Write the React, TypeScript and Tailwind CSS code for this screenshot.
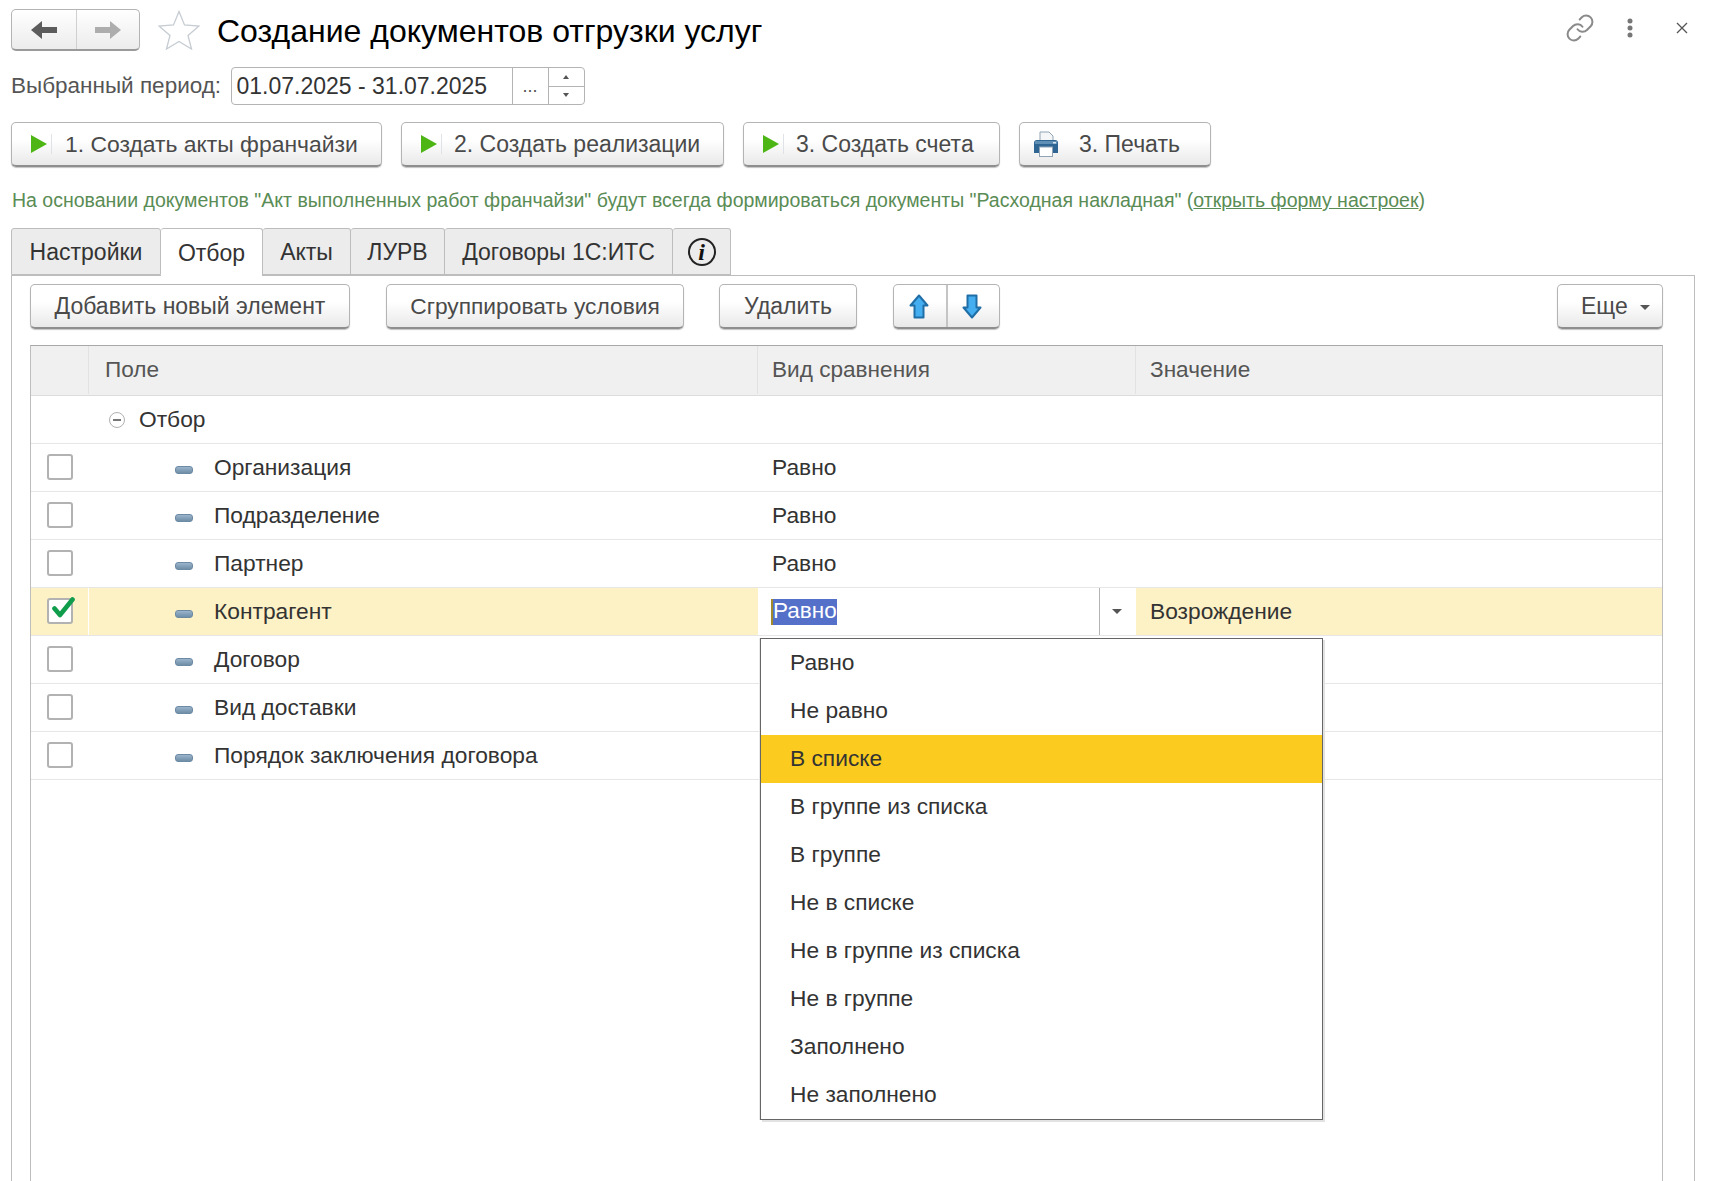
import { Link } from "lucide-react"
import type { ReactNode } from "react"

const btn = "flex items-center rounded-[5px] border border-[#b4b4b4] border-b-2 border-b-[#8e8e8e] bg-gradient-to-b from-white from-40% to-[#e9e9e9] shadow-[0_1px_1px_#c4c4c4] text-[#4a4a4a]"

const Play = () => (
    <div className="flex items-center">
        <div className="w-0 h-0 border-y-[9px] border-y-transparent border-l-[16px] border-l-[#4db514]" />
        <div className="ml-[4px] w-px h-[20px] bg-[#dfe3e8]" />
    </div>
)

const Printer = () => (
    <svg width="26" height="26" viewBox="0 0 26 26">
        <path d="M7 1h9l4 4v6H7z" fill="#f4f6f8" stroke="#8fa3b5" />
        <path d="M1 12q0-3 3-3h18q3 0 3 3v10H1z" fill="#2f6592" />
        <rect x="2" y="10" width="22" height="3" fill="#5f8fb5" />
        <rect x="20" y="11" width="3" height="1.5" fill="#d9e6f0" />
        <rect x="6.5" y="16" width="13" height="9.5" fill="#fff" stroke="#8fa3b5" />
    </svg>
)

const Arrow = ({ dir }: { dir: "up" | "down" }) => (
    <svg width="20" height="25" viewBox="0 0 20 25" className={dir === "down" ? "rotate-180" : ""}>
        <path d="M10 1.500 18.500 11.500 14.500 11.500 14.500 23.500 5.500 23.500 5.500 11.500 1.500 11.500z" fill="#45aef0" stroke="#1f6ea6" strokeWidth="2" strokeLinejoin="round" />
    </svg>
)

const NavArrow = ({ color, flip }: { color: string; flip?: boolean }) => (
    <svg width="26" height="18" viewBox="0 0 26 18" className={flip ? "rotate-180" : ""}>
        <path d="M0 9 11 0v6h15v6H11v6z" fill={color} />
    </svg>
)

const Check = ({ on }: { on?: boolean }) => (
    <div className="relative mb-[2px] w-[26px] h-[26px] rounded-[3px] border-2 border-[#b2b2b2] bg-white">
        {on && (
            <svg width="23" height="21" viewBox="0 0 23 21" className="absolute left-[3px] top-[-3px]">
                <path d="M2.5 11.5l5.500 6.500L20.500 2.500" fill="none" stroke="#0f9d4c" strokeWidth="4.6" strokeLinecap="round" strokeLinejoin="round" />
            </svg>
        )}
    </div>
)

const Pill = () => (
    <div className="mt-[4px] w-[18px] h-[8px] rounded-[3px] bg-gradient-to-b from-[#9ab4cc] to-[#6f8ea8] border border-[#6d8aa3]" />
)

const Tab = ({ w, active, children }: { w: string; active?: boolean; children: ReactNode }) => (
    <div className={`${w} flex items-center justify-center pt-[2px] rounded-t-[3px] border border-l-0 first:border-l border-[#bdbdbd] ${active ? "h-[48px] -mb-px bg-white border-b-0" : "h-[47px] bg-[#ececec]"}`}>
        {children}
    </div>
)

const rows = ["Организация", "Подразделение", "Партнер", "Контрагент", "Договор", "Вид доставки", "Порядок заключения договора"]

const options = ["Равно", "Не равно", "В списке", "В группе из списка", "В группе", "Не в списке", "Не в группе из списка", "Не в группе", "Заполнено", "Не заполнено"]

export default function App() {
    return (
        <div className="relative w-[1713px] h-[1181px] overflow-hidden bg-white font-['Liberation_Sans',Arial,sans-serif] text-[22.75px] text-[#333] leading-none">
            {/* title bar */}
            <div className="flex items-center h-[42px] mt-[9px] ml-[11px] mr-[22px]">
                <div className="flex w-[129px] h-[42px] rounded-[5px] border border-[#b4b4b4] border-b-2 border-b-[#9a9a9a] bg-gradient-to-b from-white to-[#ececec]">
                    <div className="w-[65px] flex items-center justify-center border-r border-[#d0d0d0]"><NavArrow color="#5c5c5c" /></div>
                    <div className="flex-1 flex items-center justify-center"><NavArrow color="#adadad" flip /></div>
                </div>
                <svg width="42" height="40" viewBox="0 0 42 40" className="ml-[18px]">
                    <path d="M21 1.500 26.500 15 41 16 30 25.500 33.500 39 21 31.500 8.500 39 12 25.500 1 16 15.500 15z" fill="#fff" stroke="#c6ccd2" strokeWidth="1.3" />
                </svg>
                <h1 className="ml-[17px] mt-[2px] text-[32px] text-black whitespace-nowrap">Создание документов отгрузки услуг</h1>
                <div className="ml-auto mb-[4px] flex items-center">
                    <Link size={30} strokeWidth={1.6} className="text-[#8a8a8a]" />
                    <svg width="6" height="20" viewBox="0 0 6 20" className="ml-[32px]">
                        <circle cx="3" cy="3" r="2.500" fill="#777" />
                        <circle cx="3" cy="10" r="2.500" fill="#777" />
                        <circle cx="3" cy="17" r="2.500" fill="#777" />
                    </svg>
                    <svg width="12" height="12" viewBox="0 0 12 12" className="ml-[43px] mr-[3px]">
                        <path d="M1 1l10 10M11 1 1 11" stroke="#555" strokeWidth="1.300" />
                    </svg>
                </div>
            </div>

            {/* period */}
            <div className="flex items-center mt-[16px] ml-[11px]">
                <span className="text-[#555] text-[22.5px] w-[219.5px] whitespace-nowrap">Выбранный период:</span>
                <div className="flex w-[354px] h-[38px] rounded-[4px] border border-[#b4b4b4]">
                    <div className="w-[281px] pl-[5px] pt-[1px] flex items-center border-r border-[#b4b4b4] text-[23px]">01.07.2025 - 31.07.2025</div>
                    <div className="w-[36px] flex items-end justify-center pb-[9px] border-r border-[#b4b4b4] text-[18px] text-[#555]">...</div>
                    <div className="flex-1 flex flex-col">
                        <div className="flex-1 flex items-center justify-center border-b border-[#b4b4b4]">
                            <div className="w-0 h-0 border-x-[3px] border-x-transparent border-b-[4px] border-b-[#555]" />
                        </div>
                        <div className="flex-1 flex items-center justify-center">
                            <div className="w-0 h-0 border-x-[3px] border-x-transparent border-t-[4px] border-t-[#555]" />
                        </div>
                    </div>
                </div>
            </div>

            {/* action buttons */}
            <div className="flex mt-[17px] ml-[11px] h-[45px] text-[23px]">
                <div className={`${btn} w-[371px] pl-[19px]`}><Play /><span className="ml-[13px] text-[22.9px]">1. Создать акты франчайзи</span></div>
                <div className={`${btn} w-[323px] ml-[19px] pl-[19px]`}><Play /><span className="ml-[12px]">2. Создать реализации</span></div>
                <div className={`${btn} w-[257px] ml-[19px] pl-[19px]`}><Play /><span className="ml-[12px]">3. Создать счета</span></div>
                <div className={`${btn} w-[192px] ml-[19px] pl-[13px]`}><Printer /><span className="ml-[20px]">3. Печать</span></div>
            </div>

            {/* hint */}
            <p className="mt-[24px] ml-[12px] h-[19px] text-[19.5px] text-[#5a8c55] whitespace-nowrap">
                На основании документов "Акт выполненных работ франчайзи" будут всегда формироваться документы "Расходная накладная" (<span className="underline">открыть форму настроек</span>)
            </p>

            {/* tabs */}
            <div className="flex mt-[18px] ml-[11px] relative z-10 text-[23px]">
                <Tab w="w-[150px]">Настройки</Tab>
                <Tab w="w-[102px]" active>Отбор</Tab>
                <Tab w="w-[88px]">Акты</Tab>
                <Tab w="w-[94px]">ЛУРВ</Tab>
                <Tab w="w-[228px]">Договоры 1С:ИТС</Tab>
                <Tab w="w-[58px]">
                    <div className="mb-[2px] w-[28px] h-[28px] rounded-full border-[2.5px] border-[#222] flex items-center justify-center font-['Liberation_Serif',serif] italic font-bold text-[24px] text-[#111]">i</div>
                </Tab>
            </div>

            {/* panel */}
            <div className="ml-[11px] w-[1684px] h-[906px] border border-b-0 border-[#bdbdbd] pt-[8px] pl-[18px] pr-[31px]">
                <div className="flex h-[45px] text-[#4a4a4a]">
                    <div className={`${btn} w-[320px] justify-center text-[23px]`}>Добавить новый элемент</div>
                    <div className={`${btn} w-[298px] ml-[36px] justify-center`}>Сгруппировать условия</div>
                    <div className={`${btn} w-[138px] ml-[35px] justify-center text-[23px]`}>Удалить</div>
                    <div className={`${btn} w-[107px] ml-[36px]`}>
                        <div className="w-[54px] h-full flex items-center justify-center pr-[3px] border-r-2 border-[#c4c4c4]"><Arrow dir="up" /></div>
                        <div className="flex-1 flex items-center justify-center pr-[3px]"><Arrow dir="down" /></div>
                    </div>
                    <div className={`${btn} w-[106px] ml-auto pl-[23px] text-[23px]`}>
                        Еще
                        <div className="ml-[12px] mt-[3px] w-0 h-0 border-x-[5px] border-x-transparent border-t-[5px] border-t-[#555]" />
                    </div>
                </div>

                {/* table */}
                <div className="mt-[16px] border-x border-t border-[#bdbdbd] border-t-[#a8a8a8] h-[836px]">
                    <div className="grid grid-cols-[58px_669px_378px_1fr] h-[50px] pb-[1px] bg-[#f0f0f0] border-b border-[#dcdcdc] text-[#555] text-[22.6px]">
                        <div className="border-r border-[#e2e2e2]" />
                        <div className="flex items-center pl-[16px] border-r border-[#e2e2e2]">Поле</div>
                        <div className="flex items-center pl-[14px] border-r border-[#e2e2e2]">Вид сравнения</div>
                        <div className="flex items-center pl-[14px]">Значение</div>
                    </div>
                    <div className="flex items-center h-[48px] border-b border-[#e6e6e6] pl-[78px]">
                        <div className="w-[16px] h-[16px] rounded-full border border-[#b0b0b0] flex items-center justify-center">
                            <div className="w-[8px] h-[2px] bg-[#777]" />
                        </div>
                        <span className="ml-[14px]">Отбор</span>
                    </div>
                    {rows.map((r) => {
                        const on = r === "Контрагент"
                        return (
                            <div key={r} className={`grid grid-cols-[58px_669px_378px_1fr] h-[48px] border-b border-[#e6e6e6] ${on ? "bg-[#fdf1c6]" : ""}`}>
                                <div className={`flex items-center pl-[16px] ${on ? "border-r border-white" : ""}`}><Check on={on} /></div>
                                <div className="flex items-center pl-[86px]">
                                    <Pill />
                                    <span className="ml-[21px]">{r}</span>
                                </div>
                                {on ? (
                                    <div className="flex bg-white">
                                        <div className="w-[342px] flex items-center pl-[14px] border-r border-[#b4b4b4]">
                                            <span className="bg-[#5570c9] text-white h-[26px] flex items-center border-l-2 border-[#a08a2c] -ml-[1px] text-[22.5px]">Равно</span>
                                        </div>
                                        <div className="flex-1 flex items-center justify-center pr-[3px]">
                                            <div className="w-0 h-0 border-x-[5px] border-x-transparent border-t-[5px] border-t-[#555]" />
                                        </div>
                                    </div>
                                ) : (
                                    <div className="flex items-center pl-[14px]">{["Организация", "Подразделение", "Партнер"].includes(r) ? "Равно" : ""}</div>
                                )}
                                <div className="flex items-center pl-[14px]">{on ? "Возрождение" : ""}</div>
                            </div>
                        )
                    })}
                </div>
            </div>

            {/* dropdown */}
            <div className="absolute left-[760px] top-[638px] w-[563px] border border-[#666] bg-white shadow-[2px_2px_0_#e2e2e2,-1px_0_0_#e8e8e8]">
                {options.map((o) => (
                    <div key={o} className={`h-[48px] flex items-center pl-[29px] pb-[2px] ${o === "В списке" ? "bg-[#fbcb1f]" : ""}`}>{o}</div>
                ))}
            </div>
        </div>
    )
}
